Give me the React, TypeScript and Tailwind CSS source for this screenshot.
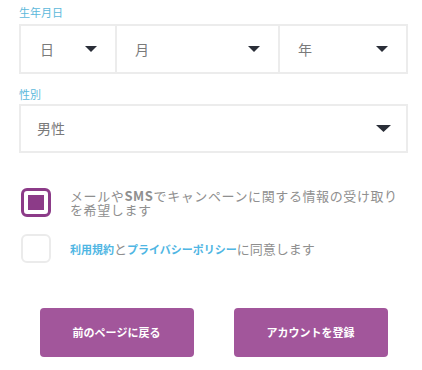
import React from "react";

const Tri = ({ w = 12, h = 6 }: { w?: number; h?: number }) => (
  <svg width={w} height={h} viewBox={`0 0 ${w} ${h}`} className="shrink-0">
    <polygon points={`0,0 ${w},0 ${w / 2},${h}`} fill="#2a2e38" />
  </svg>
);

export default function App() {
  const font = { fontFamily: '"Noto Sans CJK JP", "Noto Sans", sans-serif' };
  return (
    <div className="w-[422px] h-[370px] bg-white overflow-hidden" style={font}>
      <div className="pl-[19px] pr-[15px] pt-[5px]">
        <div className="text-[11px] leading-[14px] text-[#5db9db] mb-[5px]">生年月日</div>
        <div className="flex h-[50px] border-2 border-[#ececec] w-[389px]">
          <div className="w-[96px] flex items-center justify-between pl-[19px] pr-[18px] border-r-2 border-[#ececec]">
            <span className="text-[14px] text-[#7a7a7a]">日</span>
            <Tri />
          </div>
          <div className="w-[163px] flex items-center justify-between pl-[18px] pr-[18px] border-r-2 border-[#ececec]">
            <span className="text-[14px] text-[#7a7a7a]">月</span>
            <Tri />
          </div>
          <div className="flex-1 flex items-center justify-between pl-[18px] pr-[18px]">
            <span className="text-[14px] text-[#7a7a7a]">年</span>
            <Tri />
          </div>
        </div>

        <div className="text-[11px] leading-[14px] text-[#5db9db] mt-[13px] mb-[3px]">性別</div>
        <div className="flex h-[49px] border-2 border-[#ececec] w-[389px] items-center justify-between pl-[16px] pr-[15px]">
          <span className="text-[14px] text-[#7a7a7a]">男性</span>
          <Tri w={15} h={7} />
        </div>

        <div className="flex items-start mt-[35px] pl-[2px]">
          <div className="w-[30px] h-[29px] border-[3px] border-[#8c3b88] rounded-[6px] p-[4px] shrink-0 flex items-center justify-center">
            <div className="w-[16px] h-[15px] bg-[#8c3b88]" />
          </div>
          <div className="ml-[19px] mt-[1px] text-[13px] leading-[14px] tracking-[0.6px] text-[#8f8f8f] whitespace-nowrap">
            メールや<span className="font-semibold">SMS</span>でキャンペーンに関する情報の受け取り
            <br />
            を希望します
          </div>
        </div>

        <div className="flex items-center mt-[17px] pl-[2px]">
          <div className="w-[30px] h-[29px] border-2 border-[#ebebeb] rounded-[6px] shrink-0" />
          <div className="ml-[19px] text-[13px] leading-[16px] text-[#8f8f8f]">
            <span className="text-[11px] font-bold text-[#4fb6e3]">利用規約</span>と
            <span className="text-[11px] font-bold text-[#4fb6e3]">プライバシーポリシー</span>に同意します
          </div>
        </div>

        <div className="flex justify-center gap-[40px] mt-[45px] w-[389px]">
          <button className="w-[154px] h-[49px] rounded-[4px] bg-[#a2569b] text-white text-[11px] font-bold">
            前のページに戻る
          </button>
          <button className="w-[154px] h-[49px] rounded-[4px] bg-[#a2569b] text-white text-[11px] font-bold">
            アカウントを登録
          </button>
        </div>
      </div>
    </div>
  );
}
